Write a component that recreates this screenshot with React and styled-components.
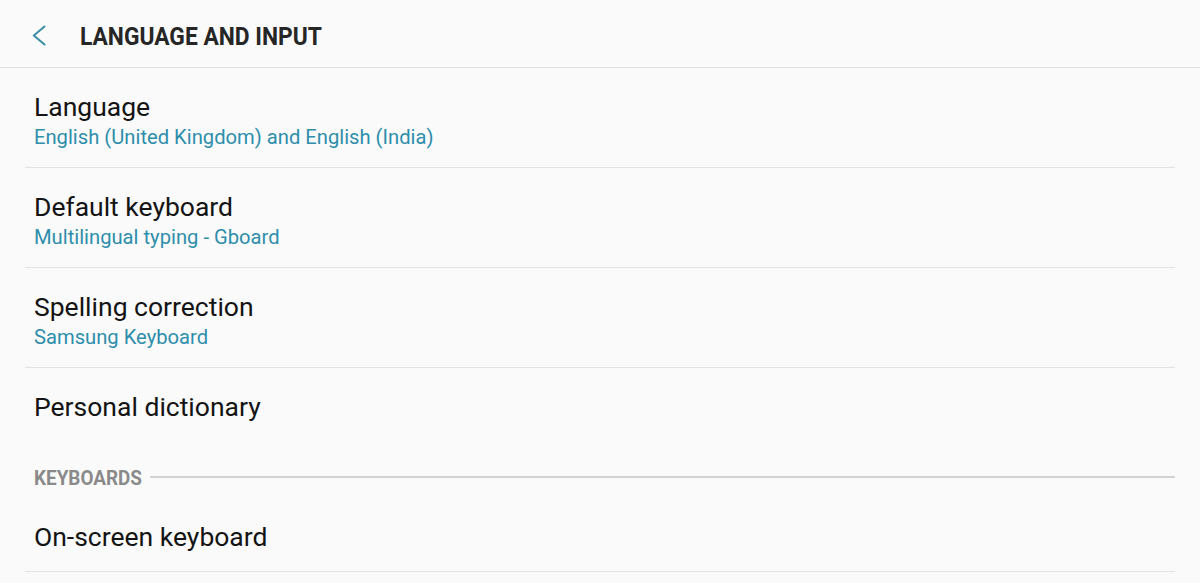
import React from "react";
import styled, { createGlobalStyle } from "styled-components";

const Global = createGlobalStyle`
  html, body { margin: 0; padding: 0; background: #fafafa; }
  body { font-family: Roboto, "Noto Sans", sans-serif; }
`;

const Page = styled.div`
  width: 1200px;
  height: 583px;
  background: #fafafa;
  overflow: hidden;
  display: flex;
  flex-direction: column;
`;

const Header = styled.header`
  height: 68px;
  flex: none;
  display: flex;
  align-items: flex-start;
  border-bottom: 1px solid #e0e0e0;
  box-sizing: border-box;
  padding: 21px 0 0 32px;
`;

const BackButton = styled.button`
  width: 14px;
  height: 21px;
  padding: 0;
  margin: 4px 34px 0 0;
  border: 0;
  background: none;
  display: flex;
  color: #3a8da6;
`;

const Title = styled.h1`
  margin: 0;
  display: inline-block;
  font-family: Roboto, sans-serif;
  font-weight: 700;
  font-size: 26.5px;
  line-height: 30px;
  color: #262626;
  white-space: nowrap;
  transform: scaleX(0.86);
  transform-origin: left center;
`;

const List = styled.div`
  display: flex;
  flex-direction: column;
  padding: 0 25px;
`;

const Row = styled.div`
  height: ${(p) => p.$h || 100}px;
  flex: none;
  box-sizing: border-box;
  display: flex;
  flex-direction: column;
  padding: 24px 9px 0;
  border-bottom: ${(p) => (p.$noBorder ? "none" : "1px solid #e3e3e3")};
`;

const RowTitle = styled.div`
  font-size: 26.5px;
  color: #141414;
  line-height: 30px;
`;

const RowSub = styled.div`
  font-size: 20.2px;
  color: #2e8eab;
  line-height: 26px;
  margin-top: 2px;
`;

const SectionHeader = styled.div`
  height: 50px;
  flex: none;
  box-sizing: border-box;
  display: flex;
  align-items: center;
  padding: 20px 0 10px 9px;
`;

const SectionLabel = styled.span`
  display: inline-block;
  font-size: 21px;
  line-height: 20px;
  font-weight: 700;
  color: #8a8a8a;
  white-space: nowrap;
  transform: scaleX(0.9);
  transform-origin: left center;
  margin-right: -4px;
`;

const SectionLine = styled.div`
  flex: 1;
  height: 2px;
  margin-top: -2px;
  background: #d2d2d2;
`;

const Chevron = () => (
  <svg width="14" height="21" viewBox="0 0 14 21" fill="none">
    <path d="M12.5 1.5 L1.8 10.5 L12.5 19.5" stroke="currentColor" strokeWidth="2" strokeLinecap="round" strokeLinejoin="round" />
  </svg>
);

export default function App() {
  return (
    <Page>
      <Global />
      <Header>
        <BackButton aria-label="Back"><Chevron /></BackButton>
        <Title>LANGUAGE AND INPUT</Title>
      </Header>
      <List>
        <Row>
          <RowTitle>Language</RowTitle>
          <RowSub>English (United Kingdom) and English (India)</RowSub>
        </Row>
        <Row>
          <RowTitle>Default keyboard</RowTitle>
          <RowSub>Multilingual typing - Gboard</RowSub>
        </Row>
        <Row>
          <RowTitle>Spelling correction</RowTitle>
          <RowSub>Samsung Keyboard</RowSub>
        </Row>
        <Row $h={80} $noBorder>
          <RowTitle>Personal dictionary</RowTitle>
        </Row>
        <SectionHeader>
          <SectionLabel>KEYBOARDS</SectionLabel>
          <SectionLine />
        </SectionHeader>
        <Row $h={74}>
          <RowTitle>On-screen keyboard</RowTitle>
        </Row>
      </List>
    </Page>
  );
}
